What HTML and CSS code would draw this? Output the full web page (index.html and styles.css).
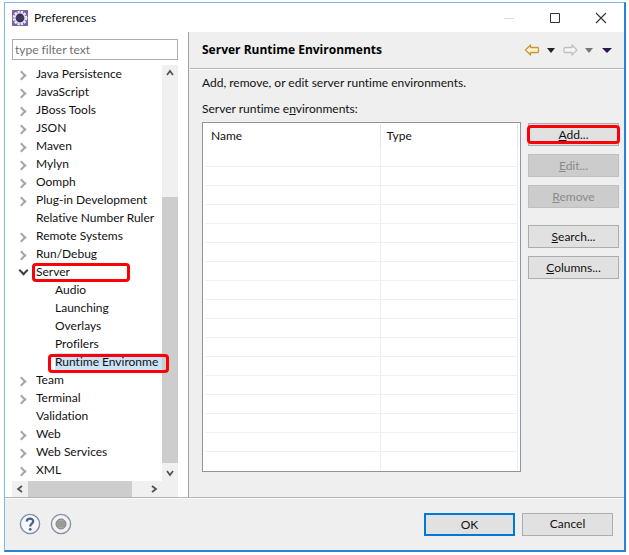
FILE: index.html
```html
<!DOCTYPE html>
<html lang="en">
<head>
<meta charset="utf-8">
<title>Preferences</title>
<link rel="stylesheet" href="styles.css">
</head>
<body>
<div class="window">
  <header class="titlebar">
    <svg class="app-icon" width="16" height="16" viewBox="0 0 16 16"><rect width="16" height="16" fill="#7763a5"/><circle cx="8" cy="8" r="6.3" fill="none" stroke="#f3f0f7" stroke-width="2" stroke-dasharray="2.3 1"/><circle cx="8" cy="8" r="5.6" fill="#e6e2ec"/><circle cx="8" cy="8" r="4.4" fill="#3a2b58"/><path d="M4 7h8M4 9h8" stroke="#655486" stroke-width=".6"/></svg>
    <h1>Preferences</h1>
    <div class="window-controls">
      <button aria-label="Minimize" disabled><svg width="12" height="12" viewBox="0 0 12 12"><path d="M1 6.500h10" stroke="#d8d8d8"/></svg></button>
      <button aria-label="Maximize"><svg width="12" height="12" viewBox="0 0 12 12"><path d="M1.500 1.500h9v9h-9z" fill="none" stroke="#333"/></svg></button>
      <button aria-label="Close"><svg width="12" height="12" viewBox="0 0 12 12"><path d="M1 1l10 10M11 1L1 11" stroke="#333" stroke-width="1.1"/></svg></button>
    </div>
  </header>
  <main class="content">
    <nav class="sidebar" aria-label="Preference pages">
      <input class="filter" type="text" placeholder="type filter text" aria-label="Filter">
      <div class="tree-view">
        <ul class="tree">
          <li class="closed"><span>Java Persistence</span></li>
          <li class="closed"><span>JavaScript</span></li>
          <li class="closed"><span>JBoss Tools</span></li>
          <li class="closed"><span>JSON</span></li>
          <li class="closed"><span>Maven</span></li>
          <li class="closed"><span>Mylyn</span></li>
          <li class="closed"><span>Oomph</span></li>
          <li class="closed"><span>Plug-in Development</span></li>
          <li><span>Relative Number Ruler</span></li>
          <li class="closed"><span>Remote Systems</span></li>
          <li class="closed"><span>Run/Debug</span></li>
          <li class="open"><span class="marked">Server</span>
            <ul>
              <li><span>Audio</span></li>
              <li><span>Launching</span></li>
              <li><span>Overlays</span></li>
              <li><span>Profilers</span></li>
              <li><span class="marked selected">Runtime Environme</span></li>
            </ul>
          </li>
          <li class="closed"><span>Team</span></li>
          <li class="closed"><span>Terminal</span></li>
          <li><span>Validation</span></li>
          <li class="closed"><span>Web</span></li>
          <li class="closed"><span>Web Services</span></li>
          <li class="closed"><span>XML</span></li>
        </ul>
        <div class="scroll-y">
          <button aria-label="Scroll up"><svg width="8" height="8" viewBox="0 0 8 8"><path d="M1 6l3-4 3 4" fill="none" stroke="#505050" stroke-width="1.7"/></svg></button>
          <div class="thumb"></div>
          <button aria-label="Scroll down"><svg width="8" height="8" viewBox="0 0 8 8"><path d="M1 2l3 4 3-4" fill="none" stroke="#505050" stroke-width="1.7"/></svg></button>
        </div>
        <div class="scroll-x">
          <button aria-label="Scroll left"><svg width="8" height="8" viewBox="0 0 8 8"><path d="M6 1L2 4l4 3" fill="none" stroke="#505050" stroke-width="1.7"/></svg></button>
          <div class="thumb"></div>
          <button aria-label="Scroll right"><svg width="8" height="8" viewBox="0 0 8 8"><path d="M2 1l4 3-4 3" fill="none" stroke="#505050" stroke-width="1.7"/></svg></button>
        </div>
      </div>
    </nav>
    <section class="page">
      <div class="page-head">
        <h2>Server Runtime Environments</h2>
        <div class="history">
          <button aria-label="Back"><svg width="16" height="12" viewBox="0 0 16 12"><path d="M1.500 6l5-5v2.500h7q1 0 1 1v3q0 1-1 1h-7V11z" fill="#fff3c4" stroke="#c8963c" stroke-width="1.300" stroke-linejoin="round"/></svg></button>
          <button aria-label="Back history"><svg width="8" height="5" viewBox="0 0 8 5"><path d="M0 0h8L4 5z" fill="#222"/></svg></button>
          <button aria-label="Forward"><svg width="16" height="12" viewBox="0 0 16 12"><path d="M15 6l-5-5v2.500H3q-1 0-1 1v3q0 1 1 1h7V11z" fill="#f5f5f5" stroke="#c0c0c0" stroke-width="1.300" stroke-linejoin="round"/></svg></button>
          <button aria-label="Forward history"><svg width="8" height="5" viewBox="0 0 8 5"><path d="M0 0h8L4 5z" fill="#777"/></svg></button>
          <button class="menu" aria-label="Menu"><svg width="10" height="5" viewBox="0 0 10 5"><path d="M0 0h10L5 5z" fill="#2c1650"/></svg></button>
        </div>
      </div>
      <div class="page-body">
        <p>Add, remove, or edit server runtime environments.</p>
        <p id="env-label">Server runtime e<u>n</u>vironments:</p>
        <div class="editor">
          <div class="table-box">
            <table aria-labelledby="env-label">
              <thead><tr><th scope="col">Name</th><th scope="col">Type</th></tr></thead>
              <tbody>
                <tr><td></td><td></td></tr>
                <tr><td></td><td></td></tr><tr><td></td><td></td></tr><tr><td></td><td></td></tr>
                <tr><td></td><td></td></tr><tr><td></td><td></td></tr><tr><td></td><td></td></tr>
                <tr><td></td><td></td></tr><tr><td></td><td></td></tr><tr><td></td><td></td></tr>
                <tr><td></td><td></td></tr><tr><td></td><td></td></tr><tr><td></td><td></td></tr>
                <tr><td></td><td></td></tr><tr><td></td><td></td></tr><tr><td></td><td></td></tr>
                <tr class="last"><td></td><td></td></tr>
              </tbody>
            </table>
          </div>
          <div class="actions">
            <button class="btn add"><u>A</u>dd...</button>
            <button class="btn" disabled><u>E</u>dit...</button>
            <button class="btn" disabled><u>R</u>emove</button>
            <button class="btn apart"><u>S</u>earch...</button>
            <button class="btn"><u>C</u>olumns...</button>
          </div>
        </div>
      </div>
    </section>
  </main>
  <footer class="footer">
    <button class="round" aria-label="Help"><svg width="22" height="22" viewBox="0 0 22 22"><circle cx="11" cy="11" r="9.600" fill="#f5f7fb" stroke="#7f8fa9" stroke-width="1.400"/><path d="M7.800 8.600C7.800 4.700 14.400 4.800 14.200 8.400C14.100 10.700 11.200 10.600 11.200 13.400" fill="none" stroke="#4a5f8c" stroke-width="2.200"/><circle cx="11.200" cy="16.300" r="1.400" fill="#4a5f8c"/></svg></button>
    <button class="round" aria-label="Record"><svg width="22" height="22" viewBox="0 0 22 22"><circle cx="11" cy="11" r="9.600" fill="#f3f3f3" stroke="#8493aa" stroke-width="1.400"/><circle cx="11" cy="11" r="5" fill="#a8a8a8" stroke="#808080"/><path d="M7 9h8M7 11h8M7 13h8" stroke="#858585" stroke-width=".7"/></svg></button>
    <div class="confirm">
      <button class="btn default">OK</button>
      <button class="btn">Cancel</button>
    </div>
  </footer>
</div>
</body>
</html>
```

FILE: styles.css
```css
*, *::before, *::after { box-sizing: border-box; }
body {
  margin: 0;
  padding: 2px 3px 3px 4px;
  min-height: 100vh;
  display: flex;
  background: #fff;
  color: #111;
  font: 12px/18px Lato, "Open Sans", sans-serif;
  font-variant-ligatures: none;
}
button, input { font: inherit; color: inherit; }
button { padding: 0; border: 0; background: none; }
svg { display: block; }
h1, h2, p, ul { margin: 0; padding: 0; }
h1 { font-size: 12px; font-weight: 400; }
h2 { font: bold 12px/18px "Open Sans", sans-serif; color: #000; }
ul { list-style: none; }

.window {
  flex: 1;
  display: flex;
  flex-direction: column;
  border: 1px solid #7fb7ea;
  border-right: 2px solid #2a82d3;
  border-bottom: 2px solid #2a82d3;
  background: #efefef;
}
.titlebar {
  display: flex;
  align-items: center;
  height: 29px;
  padding-left: 7px;
  gap: 6px;
  background: #fff;
}
.window-controls { display: flex; margin-left: auto; }
.window-controls button { width: 46px; display: grid; place-items: center; }

.content { flex: 1; display: flex; }
.sidebar {
  width: 184px;
  flex: none;
  display: flex;
  flex-direction: column;
  gap: 5px;
  padding: 7px 10px 0 7px;
  background: #fff;
  border-right: 1px solid #a0a0a0;
}
.filter {
  width: 100%;
  height: 21px;
  padding: 0 2px;
  border: 1px solid #abadb3;
  background: #fff;
}
.filter::placeholder { color: #707070; opacity: 1; }
.tree-view {
  flex: 1;
  display: grid;
  grid-template-columns: 1fr 16px;
  grid-template-rows: 1fr 16px;
}
.tree { min-width: 0; }
.tree li { position: relative; padding-left: 24px; white-space: nowrap; }
.tree li li { padding-left: 19px; }
.tree li > span { display: block; height: 18px; }
.closed::before, .open::before {
  content: "";
  position: absolute;
  left: 6px;
  top: 7px;
  width: 7px;
  height: 7px;
  border: solid #a6a6a6;
  border-width: 2px 2px 0 0;
  transform: rotate(45deg);
}
.open::before {
  left: 8px;
  top: 4px;
  border-color: #404040;
  transform: rotate(135deg);
}
.marked { position: relative; }
.marked::after, .add::after {
  content: "";
  position: absolute;
  inset: 0 32px -1px -4px;
  border: 3px solid #fb0007;
  border-radius: 4px;
}
.selected { background: #cde4f8; }
.selected::after { inset: 1px -7px -2px -7px; }

.scroll-y, .scroll-x { display: flex; background: #f0f0f0; }
.scroll-y { flex-direction: column; }
.scroll-x { grid-column: 1 / -1; padding-right: 16px; }
.scroll-y button, .scroll-x button { width: 16px; height: 16px; display: grid; place-items: center; }
.scroll-y .thumb { flex: 1; margin: 116px 0 2px; background: #cdcdcd; }
.scroll-x .thumb { flex: 1; margin-right: 14px; background: #cdcdcd; }

.page { flex: 1; min-width: 0; margin-left: 1px; display: flex; flex-direction: column; }
.page-head {
  display: flex;
  align-items: center;
  justify-content: space-between;
  height: 37px;
  padding: 0 12px;
  border-bottom: 1px solid #b5b5b5;
  box-shadow: 0 1px #fafafa;
}
.history { display: flex; align-items: center; gap: 7px; }
.menu { margin-left: 2px; }
.page-body {
  flex: 1;
  display: flex;
  flex-direction: column;
  gap: 8px;
  padding: 5px 5px 25px 12px;
}
.editor { flex: 1; display: flex; gap: 7px; margin-top: -4px; }
.table-box {
  flex: 1;
  border: 1px solid #8f949e;
  padding: 1px 2px;
  background: #fff;
}
table { width: 100%; border-collapse: collapse; table-layout: fixed; }
th {
  height: 23px;
  padding: 0 6px;
  font-weight: 400;
  text-align: left;
  border-right: 1px solid #e5e5e5;
}
th:first-child { width: 56%; }
td {
  height: 19px;
  padding: 0;
  border-right: 1px solid #e5effa;
  border-bottom: 1px solid #f0f0f0;
}
.last td { border-bottom: 0; }
.actions { width: 91px; display: flex; flex-direction: column; gap: 8px; padding-top: 1px; }
.btn {
  position: relative;
  width: 91px;
  height: 23px;
  line-height: 20px;
  border: 1px solid #adadad;
  background: #e1e1e1;
  text-align: center;
}
.btn:disabled { color: #8a8a8a; background: #ccc; border-color: #bfbfbf; }
.add::after { inset: 1px -2px; }
.apart { margin-top: 9px; }

.footer {
  display: flex;
  align-items: center;
  height: 53px;
  padding: 0 11px 0 14px;
  gap: 9px;
  border-top: 1px solid #b5b5b5;
  box-shadow: inset 0 1px #fafafa;
}
.confirm { display: flex; gap: 7px; margin-left: auto; }
.default { border: 2px solid #0078d7; }
```
